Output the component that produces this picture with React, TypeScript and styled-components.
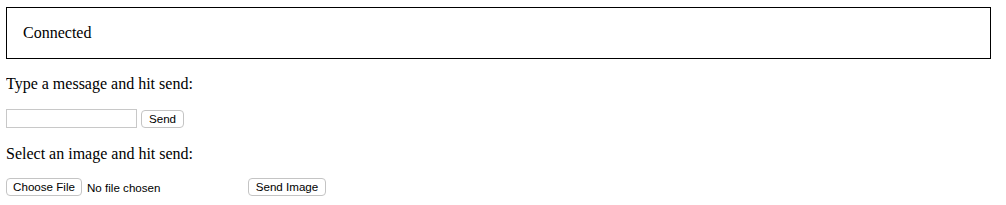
import React, {useState} from "react";
import styled, {createGlobalStyle} from "styled-components";

const GlobalStyle = createGlobalStyle`
  body {
    margin: 7px 15px 0 6px;
    font-family: 'Liberation Serif', 'Times New Roman', serif;
    font-size: 16px;
    color: #000;
    background: #fff;
  }
`;

const Status = styled.div`
  border: 1px solid black;
  padding: 16px;
  line-height: 18px;
`;

const Label = styled.p<{ $after?: number }>`
  margin: 16px 0 ${p => p.$after ?? 16}px;
  line-height: 18px;
`;

const Row = styled.form<{ $height?: number }>`
  display: flex;
  align-items: flex-start;
  height: ${p => p.$height ?? 19}px;
`;

const Input = styled.input`
  box-sizing: border-box;
  width: 131px;
  height: 19px;
  margin: 0 4px 0 0;
  padding: 1px 2px;
  border: 1px solid #c8c8c8;
  font-family: 'Liberation Sans', Arial, sans-serif;
  font-size: 13px;
  outline: none;
`;

const Button = styled.button<{ $width: number; $top?: number }>`
  box-sizing: border-box;
  width: ${p => p.$width}px;
  height: 18px;
  margin: ${p => p.$top ?? 0}px 0 0;
  padding: 0;
  border: 1px solid #c4c4c4;
  border-radius: 4px;
  background: #fff;
  font-family: 'Liberation Sans', Arial, sans-serif;
  font-size: 11.6px;
  line-height: 16px;
  text-align: center;
  white-space: nowrap;
  color: #000;
  cursor: pointer;
`;

const FilePicker = styled.label`
  display: flex;
  align-items: center;
  width: 242px;
  cursor: pointer;

  input {
    display: none;
  }
`;

const FileButton = styled(Button).attrs({as: "span"})`
  display: inline-block;
`;

const FileName = styled.span`
  margin-left: 5px;
  font-family: 'Liberation Sans', Arial, sans-serif;
  font-size: 11.6px;
  white-space: nowrap;
`;

function App() {
    const [message, setMessage] = useState("");
    const [fileName, setFileName] = useState("");

    return (
        <>
            <GlobalStyle/>
            <Status>Connected</Status>
            <Label>Type a message and hit send:</Label>
            <Row $height={20} onSubmit={e => e.preventDefault()}>
                <Input type="text" value={message} onChange={e => setMessage(e.target.value)}/>
                <Button type="submit" $width={43} $top={1}>Send</Button>
            </Row>
            <Label $after={15}>Select an image and hit send:</Label>
            <Row onSubmit={e => e.preventDefault()}>
                <FilePicker>
                    <input type="file" accept="image/*"
                           onChange={e => setFileName(e.target.files?.[0]?.name ?? "")}/>
                    <FileButton $width={76}>Choose File</FileButton>
                    <FileName>{fileName || "No file chosen"}</FileName>
                </FilePicker>
                <Button type="submit" $width={78}>Send Image</Button>
            </Row>
        </>
    )
}

export default App
